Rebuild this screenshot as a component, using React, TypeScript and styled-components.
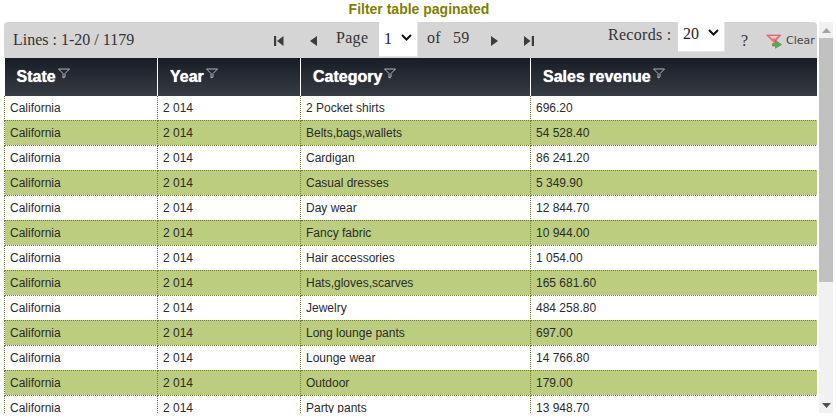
import React from "react";
import styled, { createGlobalStyle } from "styled-components";

const Global = createGlobalStyle`
  html, body { margin: 0; padding: 0; background: #fff; overflow: hidden; }
  #root { width: 836px; height: 420px; }
`;

const Page = styled.div`
  width: 836px; height: 413px; overflow: hidden;
  display: flex; flex-direction: column; font-family: "Liberation Sans", Arial, sans-serif;
`;
const Title = styled.div`
  height: 22px; padding: 1px 0 0 2px; box-sizing: border-box; text-align: center;
  font-size: 14px; line-height: 16px; font-weight: 700; color: #808000;
`;
const Main = styled.div`
  flex: 1; min-height: 0; display: flex; padding-left: 4px; padding-right: 3px;
`;
const Content = styled.div`
  width: 813px; min-height: 0; overflow: hidden; display: flex; flex-direction: column;
`;
const Toolbar = styled.div`
  height: 36px; flex: none; background: #d5d5d6; border-radius: 4px 4px 0 0;
  display: flex; align-items: flex-start; font-family: "Liberation Serif", "Times New Roman", serif;
  font-size: 16px; color: #333;
`;
const Lines = styled.span`width: 260px; padding: 9px 0 0 9px; box-sizing: border-box; line-height: 18px;`;
const NavBtn = styled.button<{ $w: number }>`
  width: ${p => p.$w}px; height: 36px; padding: 1px 0 0; border: 0; background: none;
  display: flex; align-items: center; justify-content: center;
`;
const Label = styled.span<{ $w: number; $top?: number; $pad?: number; $gap?: number }>`
  width: ${p => p.$w}px; padding-top: ${p => p.$top ?? 7}px; padding-left: ${p => p.$pad ?? 0}px;
  margin-left: ${p => p.$gap ?? 0}px;
  box-sizing: border-box; line-height: 18px; letter-spacing: 0.3px; white-space: nowrap;
`;
const SelectBox = styled.div<{ $w: number; $h: number; $top: number }>`
  width: ${p => p.$w}px; height: ${p => p.$h}px; background: #fff; flex: none; box-sizing: border-box;
  display: flex; align-items: flex-start; justify-content: space-between; padding: ${p => p.$top}px 5px 0 5px;
  font-size: 16px; line-height: 18px;
  border-right: 1px solid #e4e4e4; border-bottom: 1px solid #e4e4e4; color: #222;
`;
const Question = styled.span`width: 41px; padding: 10px 0 0 16px; box-sizing: border-box; font-size: 16px; line-height: 18px;`;
const ClearBtn = styled.div`
  display: flex; align-items: center; gap: 2px; padding-top: 10px;
  font-family: "DejaVu Sans", sans-serif; font-size: 11px; line-height: 18px; color: #444;
`;
const Table = styled.table`
  width: 813px; border-collapse: collapse; table-layout: fixed; flex: none;
`;
const Th = styled.th<{ $w: number }>`
  width: ${p => p.$w}px; height: 38px; padding: 0 0 0 12px; box-sizing: border-box; text-align: left;
  background: linear-gradient(#181d26, #373b43); color: #fff; font-size: 16px; font-weight: 700;
  border-left: 1px solid #fff; white-space: nowrap; line-height: 18px;
  &:first-child { border-left: 0; }
`;
const ThInner = styled.span`display: inline-flex; align-items: flex-start; gap: 2px; text-shadow: 0 0 1px #fff;`;
const Tr = styled.tr<{ $alt: boolean }>`
  height: 25px; background: ${p => (p.$alt ? "#bccd7f" : "#fff")};
  &:first-child { height: 24px; }
`;
const Td = styled.td`
  padding: 0 0 0 5px; box-sizing: border-box; font-size: 12px; color: #2b2b2b;
  border: 1px dotted #6f7d33; border-top: 0; white-space: nowrap; line-height: 14px;
`;
const Scrollbar = styled.div`
  width: 14px; margin-left: 2px; background: #f1f1f1; display: flex; flex-direction: column;
`;
const ScrollArrow = styled.div`
  height: 16px; flex: none; display: flex; align-items: center; justify-content: center;
`;
const ScrollTrack = styled.div`flex: 1; display: flex; flex-direction: column;`;
const ScrollThumb = styled.div`height: 244px; flex: none; background: #c1c1c1;`;

const Filter = () => (
  <svg width="12" height="11" viewBox="0 0 12 11">
    <path d="M0.5 1 H11.5 L7 5.5 V9 L5 10 V5.5 Z" fill="none" stroke="#b5b7bb" strokeWidth="1" />
  </svg>
);
const First = () => (<svg width="10" height="10" viewBox="0 0 10 10"><path d="M0 0h2.2v10H0zM9.5 0v10L3 5z" fill="#3c3c3c" /></svg>);
const Prev = () => (<svg width="7" height="10" viewBox="0 0 7 10"><path d="M7 0v10L0 5z" fill="#3c3c3c" /></svg>);
const Next = () => (<svg width="7" height="10" viewBox="0 0 7 10"><path d="M0 0v10l7-5z" fill="#3c3c3c" /></svg>);
const Last = () => (<svg width="10" height="10" viewBox="0 0 10 10"><path d="M0 0v10l6.5-5zM7.8 0H10v10H7.8z" fill="#3c3c3c" /></svg>);
const Chevron = () => (
  <svg width="11" height="16" viewBox="0 0 11 16"><path d="M1 5l4.5 4.5L10 5" fill="none" stroke="#111" strokeWidth="2" /></svg>
);
const ClearIcon = () => (
  <svg width="18" height="15" viewBox="0 0 18 15">
    <path d="M0.5 1h14.5l-3.5 4-3 4-3-3z" fill="#ef6f78" stroke="#d8555f" strokeWidth="0.6" />
    <path d="M3.5 2h8.5l-2.5 2.5h-4z" fill="#fbc6c9" />
    <path d="M6.5 9.5h3V6.5L15.5 10.5l-6 3.8V12h-3z" fill="#5da94a" stroke="#3f8430" strokeWidth="0.5" />
  </svg>
);
const Up = () => (<svg width="9" height="5" viewBox="0 0 9 5"><path d="M0 5L4.5 0 9 5z" fill="#a3a3a3" /></svg>);
const Down = () => (<svg width="9" height="5" viewBox="0 0 9 5"><path d="M0 0L4.5 5 9 0z" fill="#505050" /></svg>);

const rows: [string, string][] = [
  ["2 Pocket shirts", "696.20"],
  ["Belts,bags,wallets", "54 528.40"],
  ["Cardigan", "86 241.20"],
  ["Casual dresses", "5 349.90"],
  ["Day wear", "12 844.70"],
  ["Fancy fabric", "10 944.00"],
  ["Hair accessories", "1 054.00"],
  ["Hats,gloves,scarves", "165 681.60"],
  ["Jewelry", "484 258.80"],
  ["Long lounge pants", "697.00"],
  ["Lounge wear", "14 766.80"],
  ["Outdoor", "179.00"],
  ["Party pants", "13 948.70"],
];

const columns: [string, number][] = [
  ["State", 153],
  ["Year", 143],
  ["Category", 230],
  ["Sales revenue", 287],
];

export default function App() {
  return (
    <Page>
      <Global />
      <Title>Filter table paginated</Title>
      <Main>
        <Content>
          <Toolbar>
            <Lines>Lines : 1-20 / 1179</Lines>
            <NavBtn $w={30}><First /></NavBtn>
            <NavBtn $w={38}><Prev /></NavBtn>
            <Label $w={47} $pad={4}>Page</Label>
            <SelectBox $w={39} $h={35} $top={8}>1<Chevron /></SelectBox>
            <Label $w={67} $pad={9}>of &nbsp;&thinsp;59</Label>
            <NavBtn $w={18}><Next /></NavBtn>
            <NavBtn $w={52}><Last /></NavBtn>
            <Label $w={70} $top={4} $gap={53}>Records :</Label>
            <SelectBox $w={47} $h={30} $top={3}>20<Chevron /></SelectBox>
            <Question>?</Question>
            <ClearBtn><ClearIcon />Clear</ClearBtn>
          </Toolbar>
          <Table>
            <thead>
              <tr>
                {columns.map(([name, w]) => (
                  <Th key={name} $w={w}><ThInner>{name}<Filter /></ThInner></Th>
                ))}
              </tr>
            </thead>
            <tbody>
              {rows.map(([cat, rev], i) => (
                <Tr key={cat} $alt={i % 2 === 1}>
                  <Td>California</Td>
                  <Td>2 014</Td>
                  <Td>{cat}</Td>
                  <Td>{rev}</Td>
                </Tr>
              ))}
            </tbody>
          </Table>
        </Content>
        <Scrollbar>
          <ScrollArrow><Up /></ScrollArrow>
          <ScrollTrack><ScrollThumb /></ScrollTrack>
          <ScrollArrow><Down /></ScrollArrow>
        </Scrollbar>
      </Main>
    </Page>
  );
}
